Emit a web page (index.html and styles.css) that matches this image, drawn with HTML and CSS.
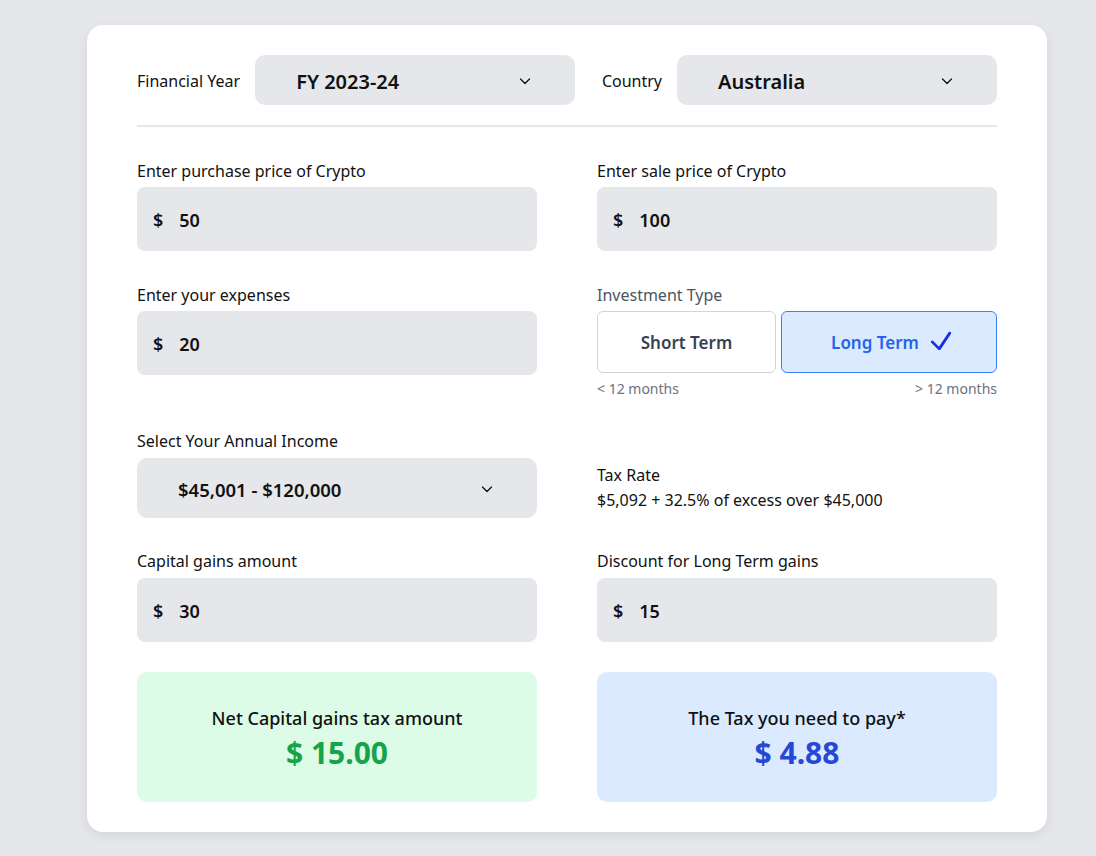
FILE: index.html
```html
<!DOCTYPE html>
<html lang="en">
<head>
<meta charset="utf-8">
<title>Crypto Tax Calculator</title>
<link rel="stylesheet" href="styles.css">
</head>
<body>
<main class="card">
  <div class="header">
    <div class="head-field">
      <span class="head-label">Financial Year</span>
      <div class="select select-head">
        <span>FY 2023-24</span>
        <svg class="chev" viewBox="0 0 16 16" width="16" height="16"><path d="M3.5 6l4.5 4.5L12.5 6" fill="none" stroke="#111" stroke-width="1.3" stroke-linecap="round" stroke-linejoin="round"/></svg>
      </div>
    </div>
    <div class="head-field">
      <span class="head-label">Country</span>
      <div class="select select-head">
        <span>Australia</span>
        <svg class="chev" viewBox="0 0 16 16" width="16" height="16"><path d="M3.5 6l4.5 4.5L12.5 6" fill="none" stroke="#111" stroke-width="1.3" stroke-linecap="round" stroke-linejoin="round"/></svg>
      </div>
    </div>
  </div>

  <div class="row row-1">
    <div class="field">
      <label class="label">Enter purchase price of Crypto</label>
      <div class="input"><span class="cur">$</span><span class="val">50</span></div>
    </div>
    <div class="field">
      <label class="label">Enter sale price of Crypto</label>
      <div class="input"><span class="cur">$</span><span class="val">100</span></div>
    </div>
  </div>

  <div class="row row-2">
    <div class="field">
      <label class="label">Enter your expenses</label>
      <div class="input"><span class="cur">$</span><span class="val">20</span></div>
    </div>
    <div class="field">
      <label class="label muted">Investment Type</label>
      <div class="toggle">
        <div class="opt opt-short">Short Term</div>
        <div class="opt opt-long active">Long Term
          <svg class="check" viewBox="0 0 24 24" width="28" height="28"><path d="M4.5 12.75l6 6 9-13.5" fill="none" stroke="#1a2ee0" stroke-width="2.4" stroke-linecap="round" stroke-linejoin="round"/></svg>
        </div>
      </div>
      <div class="hints"><span>&lt; 12 months</span><span>&gt; 12 months</span></div>
    </div>
  </div>

  <div class="row row-3">
    <div class="field">
      <label class="label label-wide">Select Your Annual Income</label>
      <div class="select select-income">
        <span>$45,001 - $120,000</span>
        <svg class="chev" viewBox="0 0 16 16" width="16" height="16"><path d="M3.5 6l4.5 4.5L12.5 6" fill="none" stroke="#111" stroke-width="1.3" stroke-linecap="round" stroke-linejoin="round"/></svg>
      </div>
    </div>
    <div class="taxrate">
      <div>Tax Rate</div>
      <div>$5,092 + 32.5% of excess over $45,000</div>
    </div>
  </div>

  <div class="row row-4">
    <div class="field">
      <label class="label label-wide">Capital gains amount</label>
      <div class="input"><span class="cur">$</span><span class="val">30</span></div>
    </div>
    <div class="field">
      <label class="label label-wide">Discount for Long Term gains</label>
      <div class="input"><span class="cur">$</span><span class="val">15</span></div>
    </div>
  </div>

  <div class="row row-5">
    <div class="result result-green">
      <div class="result-title">Net Capital gains tax amount</div>
      <div class="result-val">$ 15.00</div>
    </div>
    <div class="result result-blue">
      <div class="result-title">The Tax you need to pay*</div>
      <div class="result-val">$ 4.88</div>
    </div>
  </div>
</main>
</body>
</html>
```

FILE: styles.css
```css
* { box-sizing: border-box; }

body {
  margin: 0;
  padding: 25px 0 40px 87px;
  background: #e5e7eb;
  font-family: "Noto Sans", "Open Sans", sans-serif;
  color: #111;
}

.card {
  width: 960px;
  background: #fff;
  border-radius: 16px;
  padding: 30px 50px 30px 50px;
  box-shadow: 0 4px 12px rgba(0, 0, 0, 0.08);
}

.header {
  display: flex;
  justify-content: space-between;
  padding-bottom: 20px;
  border-bottom: 2px solid #e5e7eb;
}

.head-field {
  display: flex;
  align-items: center;
  gap: 15px;
}

.head-label {
  font-size: 16px;
  padding-top: 2px;
}

.select {
  display: flex;
  align-items: center;
  justify-content: space-between;
  background: #e5e7eb;
  border-radius: 10px;
  font-weight: 600;
}

.select-head {
  width: 320px;
  height: 50px;
  padding: 2px 42px 0 41px;
  font-size: 20px;
}

.select-income {
  height: 60px;
  padding: 2px 42px 0 41px;
  font-size: 18.5px;
}

.chev { display: block; }

.row {
  display: grid;
  grid-template-columns: 400px 400px;
  column-gap: 60px;
}

.row-1 { margin-top: 32px; }
.row-2 { margin-top: 32px; }
.row-3 { margin-top: 30px; }
.row-4 { margin-top: 31px; }
.row-5 { margin-top: 30px; }

.field {
  display: flex;
  flex-direction: column;
}

.label {
  font-size: 16px;
  line-height: 24px;
  margin-bottom: 4px;
}

.label.label-wide { margin-bottom: 5px; }

.label.muted { color: #4b5563; }

.input {
  display: flex;
  align-items: center;
  height: 64px;
  background: #e5e7eb;
  border-radius: 8px;
  padding: 2px 0 0 16px;
  font-size: 18px;
  font-weight: 600;
}

.cur { margin-right: 16px; }

.toggle {
  display: grid;
  grid-template-columns: 179fr 216fr;
  gap: 5px;
  height: 62px;
}

.opt {
  display: flex;
  align-items: center;
  justify-content: center;
  border-radius: 6px;
  font-size: 17px;
  font-weight: 600;
}

.opt-short {
  border: 1px solid #d1d5db;
  color: #374151;
  background: #fff;
}

.opt-long {
  border: 1px solid #3b82f6;
  background: #dbeafe;
  color: #2563eb;
  gap: 8px;
  padding-left: 8px;
}

.check { display: block; margin-top: -3px; }

.hints {
  display: flex;
  justify-content: space-between;
  font-size: 14px;
  line-height: 20px;
  color: #6b7280;
  margin-top: 6px;
}

.taxrate {
  align-self: center;
  font-size: 16px;
  line-height: 25px;
  padding-top: 28px;
}

.result {
  height: 130px;
  border-radius: 10px;
  display: flex;
  flex-direction: column;
  align-items: center;
  justify-content: center;
  padding-top: 4px;
}

.result-green { background: #dcfce7; }
.result-blue { background: #dbeafe; }

.result-title {
  font-size: 18px;
  font-weight: 500;
  line-height: 27px;
}

.result-val {
  font-size: 30px;
  font-weight: 700;
  line-height: 40px;
  margin-top: 1px;
}

.result-green .result-val { color: #16a34a; }
.result-blue .result-val { color: #2548d6; }
```
